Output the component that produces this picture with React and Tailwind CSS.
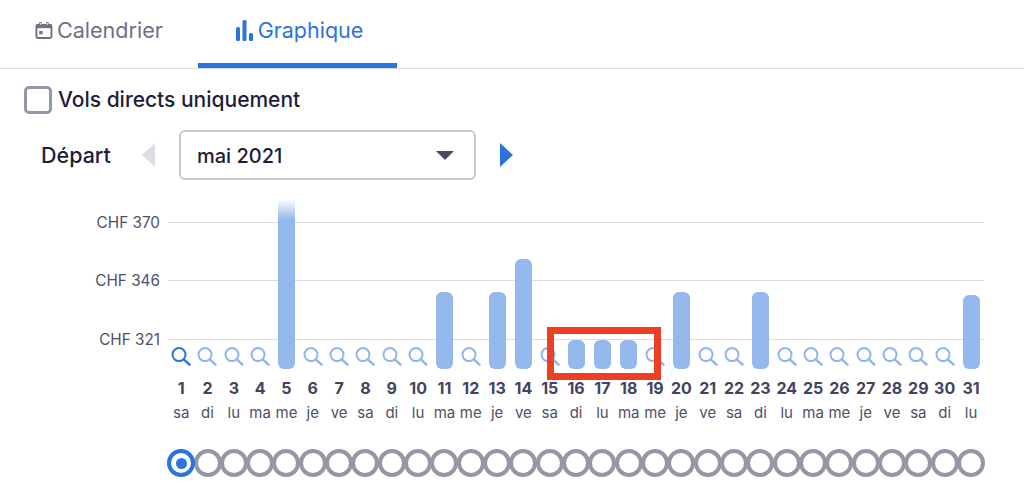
const bars = { 5: 170, 11: 77, 13: 77, 14: 110, 16: 29, 17: 29, 18: 29, 20: 77, 23: 77, 31: 74 };
const dayNames = ["sa", "di", "lu", "ma", "me", "je", "ve"];
const days = Array.from({ length: 31 }, (_, i) => ({ n: i + 1, name: dayNames[i % 7] }));
const font = { fontFamily: "Inter, sans-serif" };

const CalendarIcon = () => (
    <svg width="19" height="19" viewBox="0 0 19 19" fill="none">
        <rect x="1.5" y="3.5" width="16" height="14" rx="1.5" stroke="#6f7083" strokeWidth="2" />
        <rect x="1.5" y="3" width="16" height="4" fill="#6f7083" />
        <rect x="4.5" y="0.5" width="2.5" height="3" fill="#6f7083" />
        <rect x="12" y="0.5" width="2.5" height="3" fill="#6f7083" />
        <rect x="5.5" y="1.5" width="1" height="2" fill="#ffffff" />
        <rect x="12.5" y="1.5" width="1" height="2" fill="#ffffff" />
        <rect x="4.5" y="10" width="3.5" height="3.5" fill="#6f7083" />
    </svg>
);

const BarsIcon = () => (
    <svg width="17" height="21" viewBox="0 0 17 21" fill="#2b73de">
        <rect x="0" y="7" width="4" height="14" rx="1.5" />
        <rect x="6.5" y="0" width="4" height="21" rx="1.5" />
        <rect x="13" y="13" width="4" height="8" rx="1.5" />
    </svg>
);

const SearchIcon = ({ active }) => (
    <svg width="20" height="19" viewBox="0 0 20 19" fill="none" stroke={active ? "#2b73de" : "#8fb5ec"} strokeWidth="2" strokeLinecap="round" className="mb-[3px]">
        <circle cx="8" cy="7.6" r="6.5" />
        <line x1="12.8" y1="12.4" x2="18.5" y2="17.6" strokeWidth="2.4" />
    </svg>
);

const DayColumn = ({ day }) => {
    const height = bars[day.n];
    return (
        <div className="flex-1 min-w-0 h-full flex flex-col items-center justify-end">
            {height ? (
                <div
                    className={`w-[17px] rounded-b-[6px] ${day.n === 5 ? "bg-gradient-to-b from-white/0 from-0% via-[#94b8ec] via-[12%] to-[#94b8ec]" : "rounded-t-[6px] bg-[#94b8ec]"}`}
                    style={{ height }}
                />
            ) : (
                <SearchIcon active={day.n === 1} />
            )}
        </div>
    );
};

export default function App() {
    return (
        <div className="w-[1024px] h-[494px] bg-white overflow-hidden text-[#1d1d3a]" style={font}>
            <div className="h-[69px] border-b border-[#dcdce6] flex items-start pl-[35px]">
                <div className="w-[128px] flex items-center gap-[4px] h-[60px] text-[21.6px] text-[#6f7083] whitespace-nowrap">
                    <CalendarIcon />
                    <span>Calendrier</span>
                </div>
                <div className="ml-[35px] w-[199px] h-[68px] border-b-[5px] border-[#2b73de] flex items-center justify-center gap-[5px] pl-[4px] pb-[3px] text-[21.5px] text-[#2b73de]">
                    <BarsIcon />
                    <span>Graphique</span>
                </div>
            </div>

            <div className="flex items-center gap-[6px] pl-[24px] mt-[17px] h-[28px]">
                <div className="w-[28px] h-[28px] rounded-[5px] border-[3.5px] border-[#9697a6] bg-white" />
                <span className="text-[21px] font-medium">Vols directs uniquement</span>
            </div>

            <div className="flex items-center mt-[16px] pl-[41px] h-[50px]">
                <span className="text-[21.5px] font-medium w-[101px] pt-[1px]">Départ</span>
                <div className="w-0 h-0 border-y-[12px] border-y-transparent border-r-[13px] border-r-[#dcdde3]" />
                <div className="ml-[24px] w-[297px] h-[50px] rounded-[6px] border-2 border-[#c9c9d4] flex items-center justify-between pl-[16px] pr-[20px]">
                    <span className="text-[20px] font-medium pt-[1px]">mai 2021</span>
                    <div className="w-0 h-0 border-x-[9px] border-x-transparent border-t-[9px] border-t-[#4a4a66]" />
                </div>
                <div className="ml-[24px] w-0 h-0 border-y-[12px] border-y-transparent border-l-[13px] border-l-[#2b73de]" />
            </div>

            <div className="flex mt-[19px]">
                <div className="w-[168px] shrink-0 h-[170px] relative">
                    <span className="absolute right-[8px] top-[13px] text-[15.3px] text-[#4f5068]">CHF 370</span>
                    <span className="absolute right-[8px] top-[71px] text-[15.3px] text-[#4f5068]">CHF 346</span>
                    <span className="absolute right-[8px] top-[130px] text-[15.3px] text-[#4f5068]">CHF 321</span>
                </div>
                <div className="w-[816px] shrink-0">
                    <div className="relative h-[170px]">
                        <div className="absolute left-0 right-0 top-[23px] h-[1px] bg-[#dcdce8]" />
                        <div className="absolute left-0 right-0 top-[81px] h-[1px] bg-[#dcdce8]" />
                        <div className="absolute left-0 right-0 top-[140px] h-[1px] bg-[#dcdce8]" />
                        <div className="absolute inset-0 flex">
                            {days.map((d) => <DayColumn key={d.n} day={d} />)}
                        </div>
                    </div>
                    <div className="flex mt-[9px]">
                        {days.map((d) => (
                            <div key={d.n} className="flex-1 min-w-0 flex flex-col items-center whitespace-nowrap">
                                <span className="text-[16px] leading-[20px] font-bold text-[#43435f]">{d.n}</span>
                                <span className="text-[15px] leading-[20px] mt-[5px] text-[#4f5068]">{d.name}</span>
                            </div>
                        ))}
                    </div>
                    <div className="flex mt-[26px]">
                        {days.map((d) => (
                            <div key={d.n} className="flex-1 min-w-0 flex justify-center">
                                {d.n === 1 ? (
                                    <div className="relative z-10 shrink-0 w-[28px] h-[28px] rounded-full border-[4px] border-[#2b73de] bg-white flex items-center justify-center">
                                        <div className="w-[11px] h-[11px] rounded-full bg-[#2b73de]" />
                                    </div>
                                ) : (
                                    <div className="shrink-0 w-[28px] h-[28px] rounded-full border-[4px] border-[#9697a6] bg-white" />
                                )}
                            </div>
                        ))}
                    </div>
                </div>
            </div>

            <div className="absolute left-[547px] top-[327px] w-[114px] h-[53px] border-[7px] border-[#ee3e24]" />
        </div>
    );
}
